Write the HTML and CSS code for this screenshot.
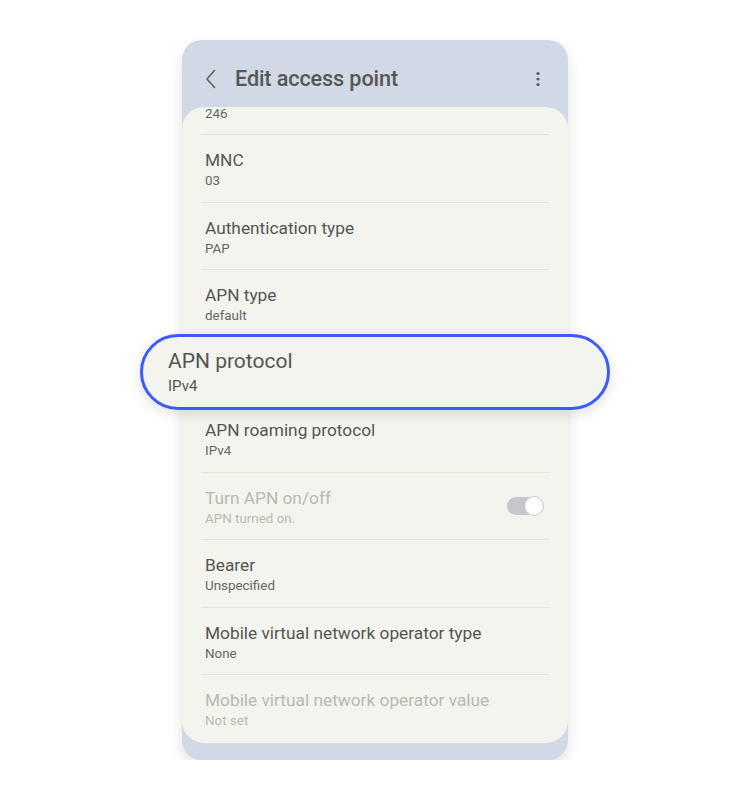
FILE: index.html
```html
<!DOCTYPE html>
<html>
<head>
<meta charset="utf-8">
<link rel="stylesheet" href="styles.css">
</head>
<body>
<div class="phone">
  <div class="header">
    <svg class="back" width="14" height="22" viewBox="0 0 14 22"><path d="M10.5 2.5 L3 11 L10.5 19.5" fill="none" stroke="#5a5a5a" stroke-width="1.5" stroke-linecap="round" stroke-linejoin="round"/></svg>
    <div class="title">Edit access point</div>
    <svg class="kebab" width="6" height="20" viewBox="0 0 6 20"><circle cx="3" cy="4.5" r="1.6" fill="#5a5a5a"/><circle cx="3" cy="10" r="1.6" fill="#5a5a5a"/><circle cx="3" cy="15.5" r="1.6" fill="#5a5a5a"/></svg>
  </div>
  <div class="card">
    <div class="list">
      <div class="row partial"><div class="sub">246</div></div>
      <div class="row"><div class="name">MNC</div><div class="sub">03</div></div>
      <div class="row"><div class="name">Authentication type</div><div class="sub">PAP</div></div>
      <div class="row"><div class="name">APN type</div><div class="sub">default</div></div>
      <div class="row focus">
        <div class="pill">
          <div class="pill-name">APN protocol</div>
          <div class="pill-sub">IPv4</div>
        </div>
      </div>
      <div class="row"><div class="name">APN roaming protocol</div><div class="sub">IPv4</div></div>
      <div class="row toggle-row disabled">
        <div class="texts"><div class="name">Turn APN on/off</div><div class="sub">APN turned on.</div></div>
        <div class="switch"><div class="knob"></div></div>
      </div>
      <div class="row"><div class="name">Bearer</div><div class="sub">Unspecified</div></div>
      <div class="row"><div class="name">Mobile virtual network operator type</div><div class="sub">None</div></div>
      <div class="row last disabled"><div class="name">Mobile virtual network operator value</div><div class="sub">Not set</div></div>
    </div>
  </div>
</div>
</body>
</html>
```
FILE: styles.css
```css
html, body {
  margin: 0;
  padding: 0;
  background: #ffffff;
  font-family: Roboto, "Liberation Sans", sans-serif;
}
.phone {
  margin: 40px 0 0 182px;
  width: 386px;
  height: 720px;
  background: #d1d8e6;
  border-radius: 20px;
  box-shadow: 0 6px 14px rgba(0,0,0,0.12);
  display: flex;
  flex-direction: column;
}
.header {
  height: 67px;
  display: flex;
  align-items: center;
  padding: 12px 27px 0 22px;
  box-sizing: border-box;
}
.back {
  margin-right: 17px;
  margin-top: -2px;
}
.title {
  flex: 1;
  font-size: 21.6px;
  color: #575757;
  font-weight: 500;
  letter-spacing: -0.1px;
  margin-top: -2px;
}
.kebab {
  margin-top: -2px;
}
.card {
  height: 636px;
  background: #f4f4ef;
  border-radius: 22px;
  overflow: visible;
}
.list {
  margin: 0 19px;
}
.row {
  height: 67.5px;
  box-sizing: border-box;
  border-bottom: 1px solid #e4e6da;
  padding: 15px 0 0 4px;
}
.row.partial {
  height: 28px;
  padding-top: 0;
}
.row.partial .sub {
  line-height: 14px;
  margin-top: 0;
}
.row.last {
  border-bottom: none;
}
.name {
  font-size: 17.3px;
  line-height: 21px;
  color: #555555;
}
.sub {
  font-size: 13.4px;
  line-height: 18px;
  margin-top: 1px;
  color: #666666;
}
.disabled .name, .disabled .sub {
  color: #b9b9b4;
}
.toggle-row {
  display: flex;
  align-items: flex-start;
}
.texts {
  flex: 1;
}
.switch {
  width: 36px;
  height: 18px;
  margin: 9px 6px 0 0;
  background: #c5c7cd;
  border-radius: 9px;
  position: relative;
}
.knob {
  position: absolute;
  right: -1px;
  top: -1px;
  width: 18px;
  height: 18px;
  border-radius: 50%;
  background: #ffffff;
  border: 1px solid #c5c7cd;
}
.focus {
  position: relative;
  border-bottom-color: transparent;
}
.pill {
  position: absolute;
  left: -61px;
  right: -61px;
  top: -4px;
  height: 76px;
  box-sizing: border-box;
  border: 3px solid #3d5bfa;
  border-radius: 38px;
  background: #f4f4ef;
  box-shadow: 0 4px 14px rgba(0,0,0,0.12);
  padding: 12px 0 0 25px;
}
.pill-name {
  font-size: 21px;
  line-height: 25px;
  color: #555555;
}
.pill-sub {
  font-size: 15px;
  line-height: 20px;
  margin-top: 2px;
  color: #555555;
}
```
